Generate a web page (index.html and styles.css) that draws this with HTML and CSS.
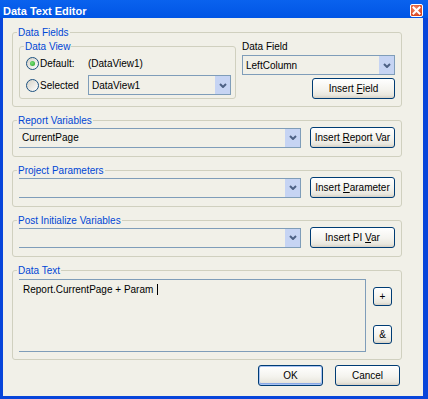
FILE: index.html
```html
<!DOCTYPE html>
<html>
<head>
<meta charset="utf-8">
<title>Data Text Editor</title>
<link rel="stylesheet" href="styles.css">
</head>
<body>
<div class="window">
  <div class="titlebar">
    <span class="title">Data Text Editor</span>
    <span class="close"><svg width="9" height="9" viewBox="0 0 9 9"><path d="M1.5 1.5L7.5 7.5M7.5 1.5L1.5 7.5" stroke="#fff" stroke-width="2" stroke-linecap="square"/></svg></span>
  </div>
  <div class="client">
    <fieldset class="group g-fields">
      <legend>Data Fields</legend>
      <div class="fields-row">
        <fieldset class="group dataview">
          <legend>Data View</legend>
          <div class="dv-row">
            <span class="radio-label"><span class="radio checked"></span>Default:</span>
            <span class="dv-value">(DataView1)</span>
          </div>
          <div class="dv-row dv-row2">
            <span class="radio-label"><span class="radio"></span>Selected</span>
            <div class="combo dv-combo"><span class="combo-text">DataView1</span><span class="drop"><svg width="8" height="5" viewBox="0 0 8 5"><path d="M1 1L4 4L7 1" fill="none" stroke="#4D6185" stroke-width="2"/></svg></span></div>
          </div>
        </fieldset>
        <div class="datafield">
          <div class="df-label">Data Field</div>
          <div class="combo df-combo"><span class="combo-text">LeftColumn</span><span class="drop"><svg width="8" height="5" viewBox="0 0 8 5"><path d="M1 1L4 4L7 1" fill="none" stroke="#4D6185" stroke-width="2"/></svg></span></div>
          <button class="btn df-btn">Insert <u>F</u>ield</button>
        </div>
      </div>
    </fieldset>

    <fieldset class="group g-row">
      <legend>Report Variables</legend>
      <div class="row">
        <div class="combo noleft"><span class="combo-text">CurrentPage</span><span class="drop"><svg width="8" height="5" viewBox="0 0 8 5"><path d="M1 1L4 4L7 1" fill="none" stroke="#4D6185" stroke-width="2"/></svg></span></div>
        <button class="btn ins-btn">Insert <u>R</u>eport Var</button>
      </div>
    </fieldset>

    <fieldset class="group g-row">
      <legend>Project Parameters</legend>
      <div class="row">
        <div class="combo noleft"><span class="combo-text"></span><span class="drop"><svg width="8" height="5" viewBox="0 0 8 5"><path d="M1 1L4 4L7 1" fill="none" stroke="#4D6185" stroke-width="2"/></svg></span></div>
        <button class="btn ins-btn">Insert <u>P</u>arameter</button>
      </div>
    </fieldset>

    <fieldset class="group g-row">
      <legend>Post Initialize Variables</legend>
      <div class="row">
        <div class="combo noleft"><span class="combo-text"></span><span class="drop"><svg width="8" height="5" viewBox="0 0 8 5"><path d="M1 1L4 4L7 1" fill="none" stroke="#4D6185" stroke-width="2"/></svg></span></div>
        <button class="btn ins-btn">Insert PI <u>V</u>ar</button>
      </div>
    </fieldset>

    <fieldset class="group g-text">
      <legend>Data Text</legend>
      <div class="text-row">
        <div class="textbox">Report.CurrentPage + Param <span class="caret"></span></div>
        <div class="side">
          <button class="btn small plus">+</button>
          <button class="btn small amp">&amp;</button>
        </div>
      </div>
    </fieldset>

    <div class="actions">
      <button class="btn dlg default">OK</button>
      <button class="btn dlg">Cancel</button>
    </div>
  </div>
</div>
</body>
</html>
```
FILE: styles.css
```css
* { box-sizing: border-box; }
html, body { margin: 0; padding: 0; }
body {
  width: 428px;
  height: 399px;
  overflow: hidden;
  font-family: "Liberation Sans", Arial, sans-serif;
  font-size: 10px;
  color: #000;
}
.window {
  width: 428px;
  height: 399px;
  background: #0845DA;
  display: flex;
  flex-direction: column;
}
.titlebar {
  height: 18px;
  flex: none;
  display: flex;
  justify-content: space-between;
  align-items: flex-start;
  background: linear-gradient(#0A62EE, #0055E5);
  padding: 0 5px 0 3px;
}
.title {
  color: #fff;
  font-weight: bold;
  font-size: 11px;
  line-height: 13px;
  padding-top: 5px;
}
.close {
  margin-top: 4px;
  width: 13px;
  height: 13px;
  border: 1px solid #fff;
  border-radius: 2px;
  background: radial-gradient(circle at 40% 35%, #F08A6A, #D8461F 75%);
  display: flex;
  align-items: center;
  justify-content: center;
}
.client {
  flex: 1;
  margin: 0 5px 3px 3px;
  background: #F1F0E8;
  padding: 8px 21px 0 9px;
  display: flex;
  flex-direction: column;
}
.group {
  margin: 0;
  min-width: 0;
  border: 1px solid #D0D0BF;
  border-radius: 3px;
}
.group > legend {
  color: #0046D5;
  line-height: 13px;
  padding: 0 1px;
  margin-left: -2px;
}
.g-fields { padding: 0 6px 7px 6px; }
.g-row { margin-top: 7px; padding: 0 6px 8px 6px; }
.g-text { margin-top: 7px; padding: 2px 6px 7px 6px; }

.fields-row { display: flex; }
.dataview {
  width: 217px;
  margin-top: 1px;
  padding: 0 4px 3px 6px;
}
.dv-row { display: flex; align-items: center; height: 20px; }
.dv-row2 { margin-top: 2px; }
.radio-label {
  width: 62px;
  flex: none;
  display: flex;
  align-items: center;
  gap: 1px;
}
.radio {
  width: 13px;
  height: 13px;
  border-radius: 50%;
  border: 1px solid #1C5180;
  background: linear-gradient(135deg, #D4D1C6, #FFFFFF);
  display: flex;
  align-items: center;
  justify-content: center;
}
.radio.checked::after {
  content: "";
  width: 5px;
  height: 5px;
  border-radius: 50%;
  background: radial-gradient(circle at 40% 40%, #7CE27C, #21A121);
}
.dv-combo { flex: 1; }

.datafield {
  width: 153px;
  margin-left: 6px;
  margin-top: 1px;
  display: flex;
  flex-direction: column;
  align-items: flex-end;
}
.df-label { align-self: stretch; line-height: 13px; }
.df-combo { align-self: stretch; margin-top: 2px; }
.df-btn { margin-top: 3px; width: 83px; }

.combo {
  height: 20px;
  border: 1px solid #7F9DB9;
  display: flex;
  align-items: center;
}
.combo.noleft { border-left: none; flex: 1; }
.combo-text { padding-left: 3px; flex: 1; white-space: nowrap; }
.drop {
  width: 15px;
  height: 100%;
  background: #C6D4F3;
  display: flex;
  align-items: center;
  justify-content: center;
}

.row { display: flex; align-items: center; gap: 9px; }

.btn {
  font-family: inherit;
  font-size: 10px;
  color: #000;
  height: 21px;
  padding: 0;
  border: 1px solid #003C74;
  border-radius: 3px;
  background: linear-gradient(180deg, #FFFFFF 0%, #F4F3EE 55%, #E9E7DE 85%, #D6D0C5 100%);
}
.ins-btn { width: 85px; flex: none; }

.text-row { display: flex; }
.textbox {
  width: 347px;
  height: 73px;
  border: 1px solid #7F9DB9;
  border-left: none;
  padding: 3px 4px;
  line-height: 13px;
  white-space: nowrap;
}
.caret {
  display: inline-block;
  width: 1px;
  height: 11px;
  background: #000;
  vertical-align: -2px;
  margin-left: 1px;
}
.side {
  margin-left: 7px;
  display: flex;
  flex-direction: column;
}
.small { width: 19px; height: 19px; }
.plus { margin-top: 8px; }
.amp { margin-top: 19px; }

.actions {
  margin-top: 5px;
  margin-right: 2px;
  display: flex;
  justify-content: flex-end;
  gap: 12px;
}
.dlg { width: 65px; }
.default { box-shadow: inset 0 0 0 1px #A9C4F2, inset 0 -1px 0 1px #8AA9E6; }
```
